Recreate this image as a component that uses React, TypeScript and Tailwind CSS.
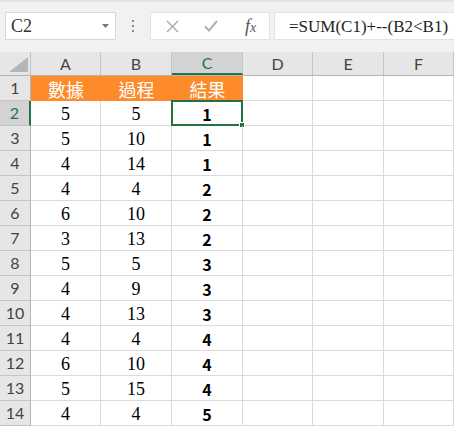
import React from 'react'

const A = [5, 5, 4, 4, 6, 3, 5, 4, 4, 4, 6, 5, 4]
const B = [5, 10, 14, 4, 10, 13, 5, 9, 13, 4, 10, 15, 4]
const C = [1, 1, 1, 2, 2, 2, 3, 3, 3, 4, 4, 4, 5]

const COLS = ['A', 'B', 'C', 'D', 'E', 'F']
const WIDTHS = ['w-[70px]', 'w-[71px]', 'w-[71px]', 'w-[70px]', 'w-[71px]', 'w-[70px]']

const uiFont = { fontFamily: 'Lato, "Open Sans", sans-serif' }
const serif = { fontFamily: '"Liberation Serif", "Times New Roman", serif' }
const cjk = { fontFamily: '"Noto Sans CJK TC", sans-serif' }

function Toolbar() {
  return (
    <div className="h-[52px] shrink-0 bg-[#f1f1f1] border-t-2 border-[#e2e2e2] flex items-start pt-[10px]">
      {/* name box */}
      <div className="ml-[5px] w-[111px] h-[28px] bg-white border border-[#d8d8d8] flex items-center justify-between pl-[5px] pr-[6px]">
        <span className="text-[18px] text-[#333] leading-none" style={serif}>C2</span>
        <svg width="7" height="4" viewBox="0 0 7 4"><path d="M0 0h7L3.5 4z" fill="#777" /></svg>
      </div>
      {/* grip */}
      <div className="w-[34px] h-[28px] flex flex-col items-center justify-center gap-[3px]">
        <span className="w-[2px] h-[2px] bg-[#8a8a8a]" />
        <span className="w-[2px] h-[2px] bg-[#8a8a8a]" />
        <span className="w-[2px] h-[2px] bg-[#8a8a8a]" />
      </div>
      {/* cancel / enter / fx */}
      <div className="w-[120px] h-[28px] bg-white border border-[#e2e2e2] flex items-center pl-[15px]">
        <svg width="13" height="13" viewBox="0 0 13 13" className="mr-[25px]">
          <path d="M1 1l11 11M12 1L1 12" stroke="#a6a6a6" strokeWidth="1.3" fill="none" />
        </svg>
        <svg width="14" height="12" viewBox="0 0 14 12" className="mr-[27px]">
          <path d="M1 6.5l4 4L13 1" stroke="#b0b0b0" strokeWidth="2" fill="none" />
        </svg>
        <span className="italic text-[18px] text-[#555] leading-none" style={serif}>
          f<span className="text-[14px]">x</span>
        </span>
      </div>
      {/* formula */}
      <div className="ml-[4px] flex-1 h-[28px] bg-white border border-[#e2e2e2] border-r-0 flex items-center pl-[14px]">
        <span className="text-[17px] text-[#222] leading-none whitespace-nowrap" style={serif}>
          =SUM(C1)+--(B2&lt;B1)
        </span>
      </div>
    </div>
  )
}

function HeaderRow() {
  return (
    <div className="flex h-[24px] bg-[#e6e6e6] border-b border-[#b5b5b5]">
      <div className="w-[31px] shrink-0 border-r border-[#c4c4c4] flex items-end justify-end pr-[2px] pb-[3px]">
        <svg width="19" height="15" viewBox="0 0 19 15"><path d="M19 0v15H0z" fill="#b6b6b6" /></svg>
      </div>
      {COLS.map((c, i) => (
        <div
          key={c}
          className={`${WIDTHS[i]} shrink-0 flex items-center justify-center text-[16px] border-r ${
            c === 'C'
              ? 'bg-[#d3d3d3] text-[#217346] border-[#c4c4c4] border-b-2 border-b-[#217346]'
              : 'text-[#444] border-[#c4c4c4]'
          }`}
          style={uiFont}
        >
          {c}
        </div>
      ))}
    </div>
  )
}

function RowHeader({ n }: { n: number }) {
  const active = n === 2
  return (
    <div
      className={`w-[31px] shrink-0 flex items-center justify-center text-[16px] border-b ${
        active
          ? 'bg-[#d3d3d3] text-[#217346] border-[#c4c4c4] border-r-2 border-r-[#217346]'
          : 'bg-[#e6e6e6] text-[#444] border-[#c4c4c4] border-r border-r-[#b5b5b5]'
      }`}
      style={uiFont}
    >
      {n}
    </div>
  )
}

export default function App() {
  return (
    <div className="w-[454px] h-[426px] overflow-hidden bg-white flex flex-col">
      <Toolbar />
      <HeaderRow />

      {/* row 1 */}
      <div className="flex h-[25px]">
        <RowHeader n={1} />
        {['數據', '過程', '結果'].map((t, i) => (
          <div
            key={t}
            className={`${WIDTHS[i]} shrink-0 bg-[#fd8a2b] flex items-center justify-center text-white text-[18px] leading-none`}
            style={cjk}
          >
            {t}
          </div>
        ))}
        {[3, 4, 5].map(i => (
          <div key={i} className={`${WIDTHS[i]} shrink-0 border-r border-b border-[#dadada]`} />
        ))}
      </div>

      {A.map((a, r) => (
        <div key={r} className="flex h-[25px] shrink-0">
          <RowHeader n={r + 2} />
          <div className="w-[70px] shrink-0 border-r border-b border-[#dadada] flex items-center justify-center pt-[2px] text-[18px] text-black" style={serif}>
            {a}
          </div>
          <div className="w-[71px] shrink-0 border-r border-b border-[#dadada] flex items-center justify-center pt-[2px] text-[18px] text-black" style={serif}>
            {B[r]}
          </div>
          <div className="relative w-[71px] shrink-0 border-r border-b border-[#dadada] flex items-center justify-center pt-[1px] text-[16px] font-semibold text-black" style={cjk}>
            {C[r]}
            {r === 0 && (
              <div className="absolute -left-px -top-px w-[72px] h-[26px] border-2 border-[#217346]">
                <div className="absolute -right-[4px] -bottom-[4px] w-[6px] h-[6px] bg-[#217346] border border-white" />
              </div>
            )}
          </div>
          <div className="w-[70px] shrink-0 border-r border-b border-[#dadada]" />
          <div className="w-[71px] shrink-0 border-r border-b border-[#dadada]" />
          <div className="w-[70px] shrink-0 border-r border-b border-[#dadada]" />
        </div>
      ))}
    </div>
  )
}
